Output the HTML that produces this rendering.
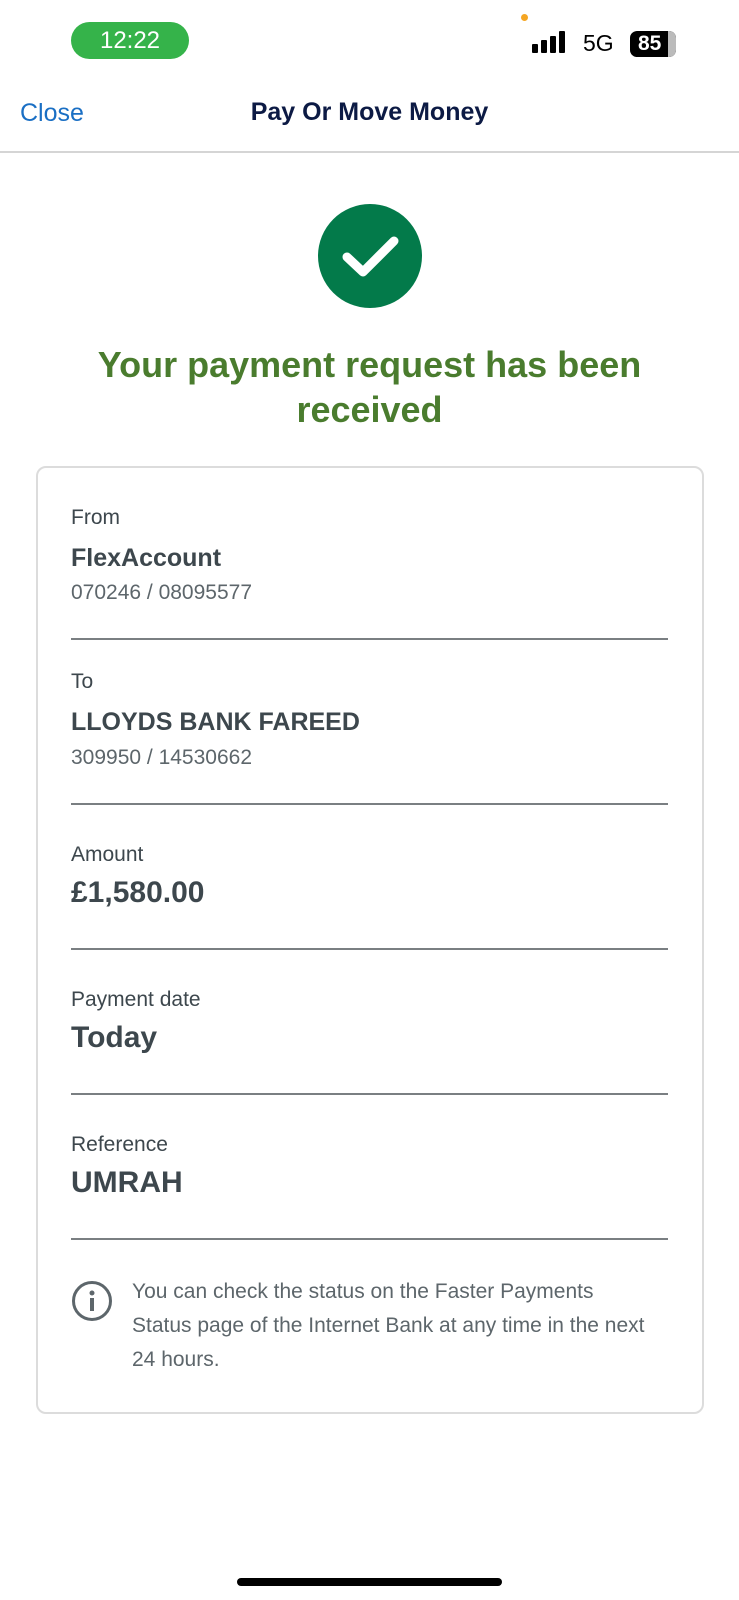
<!DOCTYPE html>
<html><head><meta charset="utf-8"><style>
*{margin:0;padding:0;box-sizing:border-box}
body{width:739px;height:1600px;background:#fff;font-family:"Liberation Sans",sans-serif;position:relative;overflow:hidden;color:#3d474d}
.a{position:absolute}
.lbl{position:absolute;left:71px;font-size:21px;color:#3d474d}
.val{position:absolute;left:71px;font-size:25px;font-weight:bold;color:#3d474d}
.val2{position:absolute;left:71px;font-size:30px;font-weight:bold;color:#3d474d}
.sub{position:absolute;left:71px;font-size:21px;color:#5d666b}
.hr{position:absolute;left:71px;width:597px;height:2px;background:#7a7f82}
</style></head><body>
<div class="a" style="left:71px;top:22px;width:118px;height:37px;background:#35b34a;border-radius:19px;color:#fff;font-size:24px;text-align:center;line-height:37px">12:22</div>
<div class="a" style="left:521px;top:14px;width:7px;height:7px;border-radius:50%;background:#f5a623"></div>
<div class="a" style="left:532px;top:44px;width:6px;height:9px;background:#000;border-radius:1px"></div>
<div class="a" style="left:541px;top:40px;width:6px;height:13px;background:#000;border-radius:1px"></div>
<div class="a" style="left:550px;top:36px;width:6px;height:17px;background:#000;border-radius:1px"></div>
<div class="a" style="left:559px;top:31px;width:6px;height:22px;background:#000;border-radius:1px"></div>
<div class="a" style="left:583px;top:30px;font-size:23px;color:#000">5G</div>
<div class="a" style="left:630px;top:31px;width:46px;height:26px;background:#000;border-radius:7px;color:#fff;font-weight:bold;font-size:21px;line-height:26px;padding-left:8px">85</div>
<div class="a" style="left:668px;top:31px;width:8px;height:26px;background:#bbb;border-radius:0 7px 7px 0"></div>
<div class="a" style="left:20px;top:99px;font-size:25px;color:#1a6fc4">Close</div>
<div class="a" style="left:0;width:739px;top:98px;text-align:center;font-size:25px;font-weight:bold;color:#0c1a44">Pay Or Move Money</div>
<div class="a" style="left:0;top:151px;width:739px;height:2px;background:#d5d5d5"></div>
<svg class="a" style="left:318px;top:204px" width="104" height="104"><circle cx="52" cy="52" r="52" fill="#037a4a"/><path d="M29 53 L45 68 L76 37" stroke="#fff" stroke-width="9" fill="none" stroke-linecap="round" stroke-linejoin="round"/></svg>
<div class="a" style="left:0;width:739px;top:342px;text-align:center;font-size:36px;font-weight:bold;color:#4a7c2e;line-height:45px">Your payment request has been<br>received</div>
<div class="a" style="left:36px;top:466px;width:668px;height:948px;border:2px solid #dcdcdc;border-radius:10px"></div>
<div class="lbl" style="top:506px">From</div>
<div class="val" style="top:544px">FlexAccount</div>
<div class="sub" style="top:581px">070246 / 08095577</div>
<div class="hr" style="top:638px"></div>
<div class="lbl" style="top:670px">To</div>
<div class="val" style="top:708px">LLOYDS BANK FAREED</div>
<div class="sub" style="top:746px">309950 / 14530662</div>
<div class="hr" style="top:803px"></div>
<div class="lbl" style="top:843px">Amount</div>
<div class="val2" style="top:876px">£1,580.00</div>
<div class="hr" style="top:948px"></div>
<div class="lbl" style="top:988px">Payment date</div>
<div class="val2" style="top:1021px">Today</div>
<div class="hr" style="top:1093px"></div>
<div class="lbl" style="top:1133px">Reference</div>
<div class="val2" style="top:1166px">UMRAH</div>
<div class="hr" style="top:1238px"></div>
<svg class="a" style="left:71px;top:1280px" width="42" height="42"><circle cx="21" cy="21" r="18.5" stroke="#5d666b" stroke-width="3" fill="none"/><circle cx="21" cy="13" r="2.5" fill="#5d666b"/><rect x="19" y="18" width="4" height="13" fill="#5d666b"/></svg>
<div class="a" style="left:132px;top:1275px;font-size:21px;color:#5d666b;line-height:34px;width:520px">You can check the status on the Faster Payments Status page of the Internet Bank at any time in the next 24 hours.</div>
<div class="a" style="left:237px;top:1578px;width:265px;height:8px;background:#000;border-radius:4px"></div>
</body></html>
